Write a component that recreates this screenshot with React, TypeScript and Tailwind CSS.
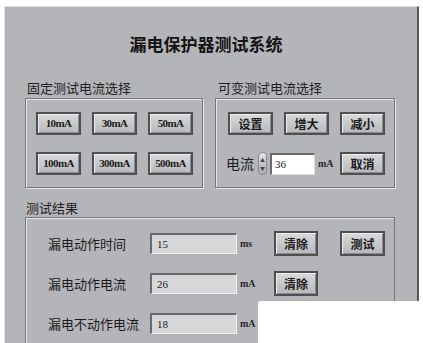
import React from 'react';

const cjk = { fontFamily: '"Noto Sans CJK SC", "Noto Sans", sans-serif' };
const latin = { fontFamily: '"Liberation Serif", "Noto Sans CJK SC", serif' };

const Btn = ({ label, w = 'w-[45px]', h = 'h-[23px]', serif = false }: { label: string; w?: string; h?: string; serif?: boolean }) => (
  <div
    className={`${w} ${h} shrink-0 flex items-center justify-center border-2 border-[#4f4f52] bg-gradient-to-b from-[#d9d9db] to-[#b7b8bb] shadow-[inset_1px_1px_0_#eeeeee,inset_-1px_-1px_0_#8c8c90] text-[#1c1c1c]`}
    style={serif ? latin : cjk}
  >
    <span className={serif ? 'text-[11px] tracking-[-0.6px] font-bold' : 'text-[12px] font-bold leading-none'}>{label}</span>
  </div>
);

const Field = ({ value }: { value: string }) => (
  <div className="w-[87px] h-[21px] shrink-0 flex items-center pl-[5px] bg-[#d6d7d9] border-t-2 border-l-2 border-t-[#6a6a6e] border-l-[#6a6a6e] border-b border-r border-b-[#eeeeee] border-r-[#eeeeee] text-[11px] text-[#222]" style={latin}>
    {value}
  </div>
);

const Unit = ({ u }: { u: string }) => (
  <span className="w-[37px] shrink-0 pl-[3px] text-[10px] font-bold text-[#2a2a2a]" style={latin}>{u}</span>
);

const App = () => {
  const fixed = ['10mA', '30mA', '50mA', '100mA', '300mA', '500mA'];
  const rows = [
    { label: '漏电动作时间', value: '15', unit: 'ms', clear: true, test: true },
    { label: '漏电动作电流', value: '26', unit: 'mA', clear: true, test: false },
    { label: '漏电不动作电流', value: '18', unit: 'mA', clear: false, test: false },
  ];

  return (
    <div className="relative w-[423px] h-[343px] bg-white overflow-hidden" style={cjk}>
      {/* panel */}
      <div className="ml-[4px] mt-[6px] w-[415px] h-[337px] bg-[#b4b5b9] border-l border-t border-l-[#e2e3e6] border-t-[#d8d9dc] border-r-2 border-r-[#58585c] flex flex-col">
        <h1 className="mt-[26px] h-[22px] leading-[22px] text-center text-[17px] font-bold text-[#141414] pr-[10px]">
          漏电保护器测试系统
        </h1>

        <div className="mt-[25px] ml-[20px] flex gap-[12px]">
          {/* fixed current */}
          <div className="flex flex-col">
            <span className="ml-[2px] h-[18px] leading-[16px] text-[13px] text-[#222]">固定测试电流选择</span>
            <div className="w-[178px] h-[90px] border border-[#76777b] shadow-[inset_1px_1px_0_#e6e6e8,1px_1px_0_#e6e6e8] pl-[10px] pt-[13px]">
              <div className="grid grid-cols-3 gap-x-[11px] gap-y-[17px] w-[157px]">
                {fixed.map((f) => (
                  <Btn key={f} label={f} serif />
                ))}
              </div>
            </div>
          </div>

          {/* variable current */}
          <div className="flex flex-col">
            <span className="ml-[3px] h-[18px] leading-[16px] text-[13px] text-[#222]">可变测试电流选择</span>
            <div className="w-[180px] h-[90px] border border-[#76777b] shadow-[inset_1px_1px_0_#e6e6e8,1px_1px_0_#e6e6e8] pl-[12px] pt-[13px] flex flex-col gap-[17px]">
              <div className="flex gap-[11px]">
                <Btn label="设置" />
                <Btn label="增大" />
                <Btn label="减小" />
              </div>
              <div className="flex items-center -ml-[2px]">
                <span className="w-[30px] text-[14px] text-[#1a1a1a]">电流</span>
                <div className="ml-[2px] w-[9px] h-[23px] rounded-[4px] bg-gradient-to-b from-[#e4e4e6] to-[#a9aaae] border border-[#8a8b8f] flex flex-col items-center justify-center text-[5px] leading-[8px] text-[#444]">
                  <span>▲</span>
                  <span>▼</span>
                </div>
                <div className="ml-[3px] w-[45px] h-[22px] bg-white border-t-2 border-l-2 border-t-[#6a6a6e] border-l-[#6a6a6e] border-b border-r border-b-[#dcdcdc] border-r-[#dcdcdc] flex items-center pl-[3px] text-[11px] text-[#222]" style={latin}>
                  36
                </div>
                <span className="w-[25px] pl-[3px] text-[10px] font-bold text-[#2a2a2a]" style={latin}>mA</span>
                <Btn label="取消" />
              </div>
            </div>
          </div>
        </div>

        {/* results */}
        <div className="mt-[12px] ml-[20px] flex flex-col">
          <span className="ml-[1px] h-[17px] leading-[16px] text-[13px] text-[#222]">测试结果</span>
          <div className="w-[370px] h-[130px] border border-[#76777b] shadow-[inset_1px_1px_0_#e6e6e8] pl-[22px] pt-[13px] flex flex-col gap-[15px]">
            {rows.map((r) => (
              <div key={r.label} className="flex items-center h-[25px]">
                <span className="w-[102px] shrink-0 text-[13px] text-[#1a1a1a] whitespace-nowrap">{r.label}</span>
                <Field value={r.value} />
                <Unit u={r.unit} />
                {r.clear && <Btn label="清除" w="w-[44px]" h="h-[25px]" />}
                {r.test && <div className="ml-[22px]"><Btn label="测试" h="h-[25px]" /></div>}
              </div>
            ))}
          </div>
        </div>
      </div>

      {/* white patch over bottom right */}
      <div className="absolute left-[258px] top-[301px] right-0 bottom-0 bg-white rounded-tl-[3px]" />
    </div>
  );
};

export default App;
